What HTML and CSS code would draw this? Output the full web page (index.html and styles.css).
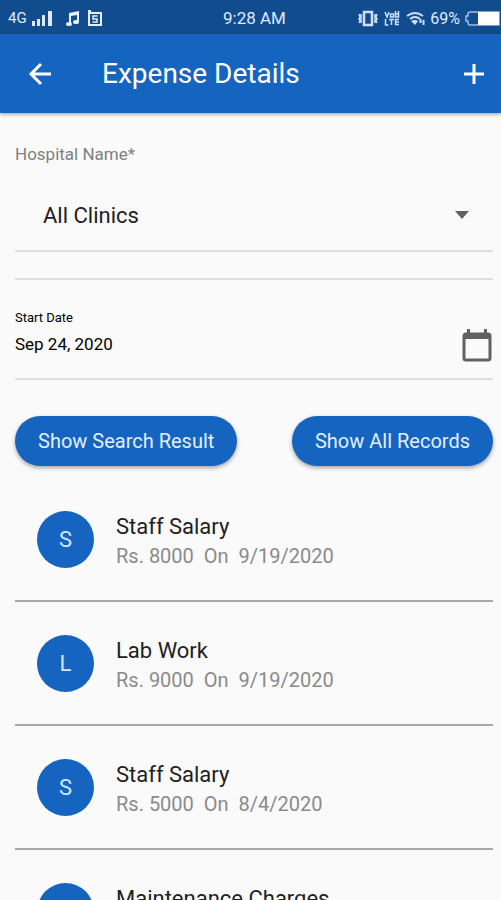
FILE: index.html
```html
<!DOCTYPE html>
<html lang="en">
<head>
    <meta charset="UTF-8">
    <meta name="viewport" content="width=device-width, initial-scale=1.0">
    <title>Expense Details</title>
    <link rel="stylesheet" href="styles.css">
</head>
<body>
    <div class="status-bar">
        <div class="status-left">
            <span class="network">4G</span>
            <svg width="22" height="17" viewBox="0 0 22 17" fill="#dfeaff">
                <path d="M1 11h3v5H1zM6 9h3v7H6zM11 5h3v11h-3zM17 1h4v15h-4z"/>
            </svg>
            <svg class="music-icon" width="16" height="17" viewBox="0 0 16 17" fill="#e8efff">
                <path d="M4 3l10-2v11h-2V5L6 6v8H4z"/>
                <ellipse cx="4" cy="14" rx="3" ry="2"/>
                <ellipse cx="11" cy="12" rx="3" ry="2"/>
            </svg>
            <svg class="app-icon" width="16" height="17" viewBox="0 0 16 17" fill="none" stroke="#e8efff">
                <path d="M2 3h12v12H2zM1 1h3" stroke-width="2"/>
                <path d="M10.500 6h-4.500v3h4v3h-4.500" stroke-width="1.500"/>
            </svg>
        </div>
        <span class="clock">9:28 AM</span>
        <div class="status-right">
            <svg width="20" height="17" viewBox="0 0 20 17" fill="none" stroke="#cfe0ff">
                <path d="M6 2h8v13H6z" stroke-width="2.500"/>
                <path d="M3 4v9M17 4v9M1 4l1 3-1 2 1 2-1 2M19 4l-1 3 1 2-1 2 1 2" stroke-width="1.500"/>
            </svg>
            <svg class="volte-icon" width="16" height="17" viewBox="0 0 16 17" fill="none" stroke="#cfe0ff" stroke-width="1.500">
                <path d="M1 2l2 5 2-5M6.500 4h3v3h-3zM11.500 1v6M14.500 1v6h-3V4h3"/>
                <path d="M1.500 9v6h3M5 9.500h5M7.500 9v6M15 9.500h-3.500v5H15M11.500 12H15"/>
            </svg>
            <svg class="wifi-icon" width="20" height="17" viewBox="0 0 20 17" fill="none" stroke="#cfe0ff" stroke-width="2">
                <path d="M1 6q8-6 16 0M4 9q5-4 10 0"/>
                <path d="M5 11q4-2 7 0l-3 4z" fill="#cfe0ff" stroke="none"/>
                <path d="M14.500 13v-4M17.500 10v5" stroke-width="2"/>
            </svg>
            <span class="percent">69%</span>
            <svg width="37" height="17" viewBox="0 0 37 17">
                <path d="M6 2h29v13H6q-2 0-2-2v-2H2V6h2V4q0-2 2-2z" fill="none" stroke="#9dbde8" stroke-width="1.500"/>
                <path d="M14 2h21v13H14z" fill="#fff"/>
            </svg>
        </div>
    </div>

    <header class="header">
        <button class="icon-btn" aria-label="Back">
            <svg width="24" height="24" viewBox="0 0 24 24" fill="none" stroke="#fff" stroke-width="3">
                <path d="M23 12H3M13 2L3 12l10 10"/>
            </svg>
        </button>
        <h1>Expense Details</h1>
        <button class="icon-btn" aria-label="Add expense">
            <svg width="22" height="22" viewBox="0 0 22 22" fill="none" stroke="#fff" stroke-width="3">
                <path d="M11 1v20M1 11h20"/>
            </svg>
        </button>
    </header>

    <main class="container">
        <div class="clinic-field">
            <label for="clinic">Hospital Name*</label>
            <div class="select-box">
                <select id="clinic">
                    <option>All Clinics</option>
                </select>
                <svg class="arrow" width="14" height="8" viewBox="0 0 14 8"><path d="M0 0h14L7 8z" fill="#616161"/></svg>
            </div>
        </div>
        <div class="spacer"></div>

        <div class="date-field">
            <div class="date-text">
                <label for="start-date">Start Date</label>
                <input id="start-date" type="text" value="Sep 24, 2020">
            </div>
            <button class="icon-btn" aria-label="Pick date">
                <svg width="30" height="33" viewBox="0 0 30 33">
                    <path d="M5 0h3v5H5zM22 0h3v5h-3z" fill="#616161"/>
                    <rect x="2" y="5" width="26" height="26" rx="2" fill="none" stroke="#616161" stroke-width="3"/>
                    <path d="M2 4h26v6H2z" fill="#616161"/>
                </svg>
            </button>
        </div>

        <div class="buttons">
            <button class="btn">Show Search Result</button>
            <button class="btn">Show All Records</button>
        </div>

        <ul class="expense-list">
            <li class="item">
                <span class="avatar">S</span>
                <div class="item-info">
                    <h2>Staff Salary</h2>
                    <p>Rs. 8000  On  9/19/2020</p>
                </div>
            </li>
            <li class="item">
                <span class="avatar">L</span>
                <div class="item-info">
                    <h2>Lab Work</h2>
                    <p>Rs. 9000  On  9/19/2020</p>
                </div>
            </li>
            <li class="item">
                <span class="avatar">S</span>
                <div class="item-info">
                    <h2>Staff Salary</h2>
                    <p>Rs. 5000  On  8/4/2020</p>
                </div>
            </li>
            <li class="item">
                <span class="avatar"></span>
                <div class="item-info">
                    <h2>Maintenance Charges</h2>
                </div>
            </li>
        </ul>
    </main>
</body>
</html>
```
FILE: styles.css
```css
* {
    box-sizing: border-box;
}
body {
    font-family: Roboto, Arial, sans-serif;
    margin: 0;
    height: 100vh;
    display: flex;
    flex-direction: column;
    background-color: #fafafa;
    color: #212121;
}
button, input, select {
    font-family: inherit;
    border: none;
    background: none;
    padding: 0;
    margin: 0;
}
svg {
    display: block;
}

/* status bar */
.status-bar {
    display: grid;
    grid-template-columns: 1fr auto 1fr;
    align-items: center;
    flex: none;
    height: 34px;
    padding: 2px 0 0 8px;
    background-color: #114c8f;
    color: #dfeaff;
    font-size: 16px;
}
.status-left, .status-right {
    display: flex;
    align-items: center;
}
.status-right {
    justify-content: flex-end;
}
.network {
    font-size: 15px;
    margin-right: 4px;
}
.music-icon {
    margin-left: 12px;
}
.app-icon {
    margin-left: 6px;
}
.clock {
    font-size: 17px;
}
.volte-icon, .wifi-icon {
    margin-left: 6px;
}
.percent {
    margin: 0 4px;
}

/* header */
.header {
    display: flex;
    align-items: center;
    flex: none;
    height: 79px;
    padding: 0 16px 0 28px;
    background-color: #1565c0;
    box-shadow: 0 1px 4px rgba(0, 0, 0, 0.4);
}
.header h1 {
    flex: 1;
    margin: 0 0 0 50px;
    color: #fff;
    font-size: 28px;
    font-weight: 400;
}
.icon-btn {
    cursor: pointer;
}

.container {
    flex: 1;
    min-height: 0;
    overflow-y: auto;
    scrollbar-width: none;
    padding: 0 8px 0 15px;
}

/* search fields */
.clinic-field {
    padding-top: 31px;
    border-bottom: 2px solid #dedede;
}
.clinic-field label {
    display: block;
    color: #808080;
    font-size: 17px;
    line-height: 20px;
}
.select-box {
    position: relative;
    padding: 21px 0 5px;
}
.select-box select {
    appearance: none;
    width: 100%;
    height: 60px;
    padding: 0 52px 0 28px;
    color: #212121;
    font-size: 22px;
}
.arrow {
    position: absolute;
    right: 24px;
    top: 47px;
    pointer-events: none;
}
.spacer {
    height: 28px;
    border-bottom: 2px solid #dedede;
}
.date-field {
    display: flex;
    align-items: flex-end;
    justify-content: space-between;
    height: 100px;
    padding: 0 1px 16px 0;
    border-bottom: 2px solid #dedede;
}
.date-text {
    flex: 1;
    color: #000;
}
.date-text label {
    display: block;
    font-size: 13px;
    line-height: 16px;
}
.date-text input {
    display: block;
    width: 100%;
    height: 36px;
    color: #000;
    font-size: 17px;
}
.buttons {
    display: flex;
    justify-content: space-between;
    padding: 36px 0 12px;
}
.btn {
    height: 50px;
    padding: 0 23px;
    border-radius: 25px;
    background-color: #1565c0;
    box-shadow: 0 2px 4px rgba(0, 0, 0, 0.35);
    color: #e3eeff;
    font-size: 20px;
    cursor: pointer;
}

/* expenses */
.expense-list {
    list-style: none;
    margin: 0;
    padding: 0;
}
.item {
    display: flex;
    align-items: flex-start;
    height: 124px;
    padding: 33px 22px 0;
    border-bottom: 2px solid #a8a8a8;
}
.avatar {
    display: flex;
    align-items: center;
    justify-content: center;
    width: 57px;
    height: 57px;
    margin-right: 22px;
    border-radius: 50%;
    background-color: #1565c0;
    color: #d5e6ff;
    font-size: 22px;
}
.item-info h2 {
    margin: 0;
    font-size: 22px;
    font-weight: 400;
    line-height: 32px;
}
.item-info p {
    margin: 0;
    color: #8a8a8a;
    font-size: 20px;
    line-height: 26px;
    white-space: pre-wrap;
}
```
